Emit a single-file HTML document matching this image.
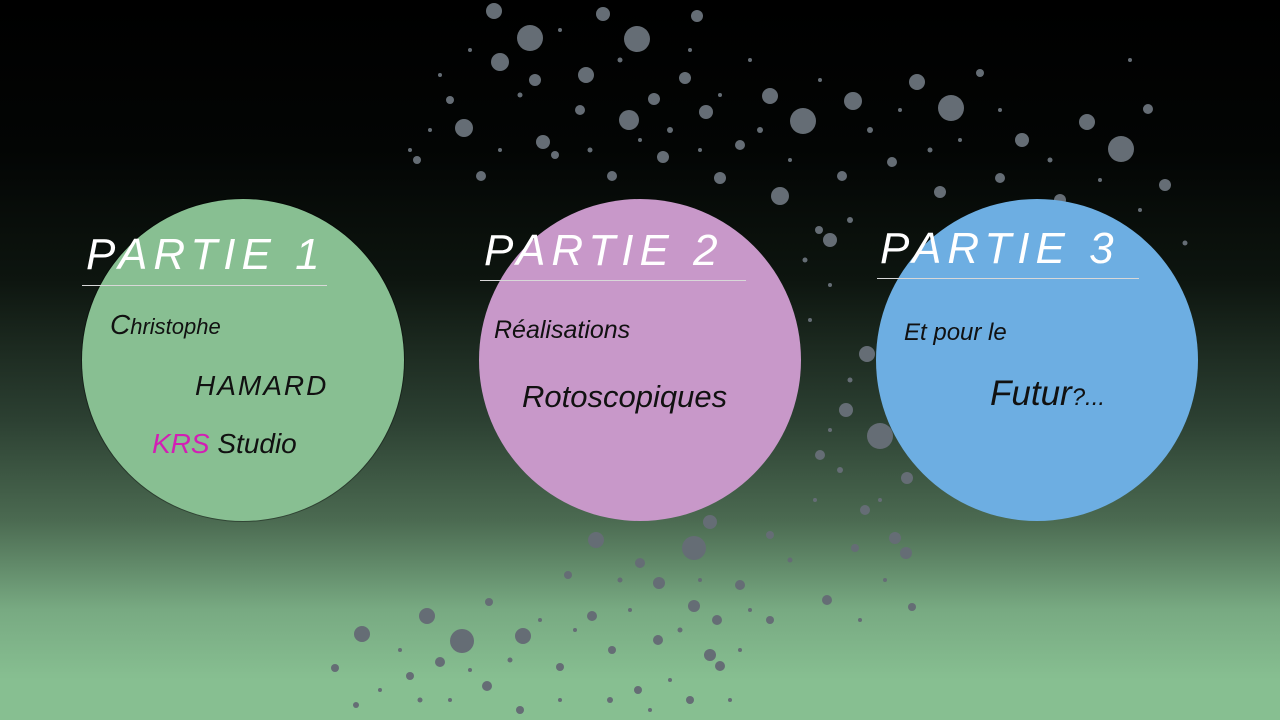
<!DOCTYPE html>
<html><head><meta charset="utf-8"><style>
body{margin:0;width:1280px;height:720px;overflow:hidden;position:relative;font-family:"Liberation Sans",sans-serif;
background:linear-gradient(to bottom,#000 0px,#030504 150px,#0d150f 280px,#2c4032 420px,#4b6a51 520px,#78aa82 610px,#87bf91 680px,#87bf91 720px);}
.c{position:absolute;width:322px;height:322px;border-radius:50%;top:199px;}
.t{position:absolute;color:#fff;font-style:italic;font-size:44px;letter-spacing:6px;font-family:"Liberation Sans",sans-serif;white-space:nowrap;}
.u{position:absolute;height:1px;background:#d8d8d8;}
.s{position:absolute;font-style:italic;color:#111;white-space:nowrap;font-family:"Liberation Sans",sans-serif;}
svg{position:absolute;left:0;top:0}
</style></head><body>
<svg width="1280" height="720" fill="#656d75">
<circle cx="494" cy="11" r="8"/><circle cx="530" cy="38" r="13"/><circle cx="637" cy="39" r="13"/><circle cx="603" cy="14" r="7"/><circle cx="697" cy="16" r="6"/><circle cx="500" cy="62" r="9"/><circle cx="464" cy="128" r="9"/><circle cx="535" cy="80" r="6"/><circle cx="586" cy="75" r="8"/><circle cx="629" cy="120" r="10"/><circle cx="654" cy="99" r="6"/><circle cx="685" cy="78" r="6"/><circle cx="706" cy="112" r="7"/><circle cx="770" cy="96" r="8"/><circle cx="803" cy="121" r="13"/><circle cx="853" cy="101" r="9"/><circle cx="917" cy="82" r="8"/><circle cx="951" cy="108" r="13"/><circle cx="1022" cy="140" r="7"/><circle cx="1087" cy="122" r="8"/><circle cx="1121" cy="149" r="13"/><circle cx="1165" cy="185" r="6"/><circle cx="1148" cy="109" r="5"/><circle cx="980" cy="73" r="4"/><circle cx="780" cy="196" r="9"/><circle cx="830" cy="240" r="7"/><circle cx="819" cy="230" r="4"/><circle cx="842" cy="176" r="5"/><circle cx="892" cy="162" r="5"/><circle cx="940" cy="192" r="6"/><circle cx="1000" cy="178" r="5"/><circle cx="1060" cy="200" r="6"/><circle cx="543" cy="142" r="7"/><circle cx="555" cy="155" r="4"/><circle cx="663" cy="157" r="6"/><circle cx="612" cy="176" r="5"/><circle cx="720" cy="178" r="6"/><circle cx="740" cy="145" r="5"/><circle cx="580" cy="110" r="5"/><circle cx="450" cy="100" r="4"/><circle cx="417" cy="160" r="4"/><circle cx="481" cy="176" r="5"/><circle cx="867" cy="354" r="8"/><circle cx="880" cy="436" r="13"/><circle cx="846" cy="410" r="7"/><circle cx="820" cy="455" r="5"/><circle cx="907" cy="478" r="6"/><circle cx="865" cy="510" r="5"/><circle cx="895" cy="538" r="6"/><circle cx="906" cy="553" r="6"/><circle cx="855" cy="548" r="4"/><circle cx="827" cy="600" r="5"/><circle cx="912" cy="607" r="4"/><circle cx="596" cy="540" r="8"/><circle cx="694" cy="548" r="12"/><circle cx="710" cy="522" r="7"/><circle cx="659" cy="583" r="6"/><circle cx="640" cy="563" r="5"/><circle cx="740" cy="585" r="5"/><circle cx="694" cy="606" r="6"/><circle cx="717" cy="620" r="5"/><circle cx="770" cy="535" r="4"/><circle cx="568" cy="575" r="4"/><circle cx="462" cy="641" r="12"/><circle cx="427" cy="616" r="8"/><circle cx="362" cy="634" r="8"/><circle cx="523" cy="636" r="8"/><circle cx="489" cy="602" r="4"/><circle cx="440" cy="662" r="5"/><circle cx="410" cy="676" r="4"/><circle cx="487" cy="686" r="5"/><circle cx="560" cy="667" r="4"/><circle cx="592" cy="616" r="5"/><circle cx="612" cy="650" r="4"/><circle cx="638" cy="690" r="4"/><circle cx="658" cy="640" r="5"/><circle cx="720" cy="666" r="5"/><circle cx="710" cy="655" r="6"/><circle cx="335" cy="668" r="4"/><circle cx="356" cy="705" r="3"/><circle cx="520" cy="710" r="4"/><circle cx="610" cy="700" r="3"/><circle cx="770" cy="620" r="4"/><circle cx="690" cy="700" r="4"/>
<g>
<circle cx="470" cy="50" r="2"/><circle cx="520" cy="95" r="2.5"/><circle cx="560" cy="30" r="2"/><circle cx="620" cy="60" r="2.5"/><circle cx="670" cy="130" r="3"/><circle cx="690" cy="50" r="2"/><circle cx="720" cy="95" r="2"/><circle cx="750" cy="60" r="2"/><circle cx="760" cy="130" r="3"/><circle cx="790" cy="160" r="2"/><circle cx="820" cy="80" r="2"/><circle cx="870" cy="130" r="3"/><circle cx="900" cy="110" r="2"/><circle cx="930" cy="150" r="2.5"/><circle cx="960" cy="140" r="2"/><circle cx="1000" cy="110" r="2"/><circle cx="1050" cy="160" r="2.5"/><circle cx="1100" cy="180" r="2"/><circle cx="1140" cy="210" r="2"/><circle cx="1185" cy="243" r="2.5"/><circle cx="1130" cy="60" r="2"/><circle cx="430" cy="130" r="2"/><circle cx="440" cy="75" r="2"/><circle cx="410" cy="150" r="2"/><circle cx="500" cy="150" r="2"/><circle cx="590" cy="150" r="2.5"/><circle cx="640" cy="140" r="2"/><circle cx="700" cy="150" r="2"/><circle cx="850" cy="220" r="3"/><circle cx="805" cy="260" r="2.5"/><circle cx="830" cy="285" r="2"/><circle cx="810" cy="320" r="2"/><circle cx="850" cy="380" r="2.5"/><circle cx="830" cy="430" r="2"/><circle cx="840" cy="470" r="3"/><circle cx="815" cy="500" r="2"/><circle cx="880" cy="500" r="2"/><circle cx="885" cy="580" r="2"/><circle cx="860" cy="620" r="2"/><circle cx="790" cy="560" r="2.5"/><circle cx="750" cy="610" r="2"/><circle cx="700" cy="580" r="2"/><circle cx="680" cy="630" r="2.5"/><circle cx="630" cy="610" r="2"/><circle cx="620" cy="580" r="2.5"/><circle cx="575" cy="630" r="2"/><circle cx="540" cy="620" r="2"/><circle cx="510" cy="660" r="2.5"/><circle cx="470" cy="670" r="2"/><circle cx="450" cy="700" r="2"/><circle cx="400" cy="650" r="2"/><circle cx="380" cy="690" r="2"/><circle cx="420" cy="700" r="2.5"/><circle cx="560" cy="700" r="2"/><circle cx="670" cy="680" r="2"/><circle cx="740" cy="650" r="2"/><circle cx="650" cy="710" r="2"/><circle cx="730" cy="700" r="2"/>
</g>
</svg>
<div class="c" style="left:82px;background:#88bf92;box-shadow:0 0 0 1px rgba(0,0,0,.35)"></div>
<div class="c" style="left:479px;background:#c898c9"></div>
<div class="c" style="left:876px;background:#6daee2"></div>

<div class="t" style="left:86px;top:230px">PARTIE 1</div>
<div class="u" style="left:82px;top:285px;width:245px"></div>
<div class="t" style="left:484px;top:226px">PARTIE 2</div>
<div class="u" style="left:480px;top:280px;width:266px"></div>
<div class="t" style="left:880px;top:224px">PARTIE 3</div>
<div class="u" style="left:877px;top:278px;width:262px"></div>

<div class="s" style="left:110px;top:309px;font-size:28px">C<span style="font-size:22px">hristophe</span></div>
<div class="s" style="left:195px;top:370px;font-size:28px;letter-spacing:2px">HAMARD</div>
<div class="s" style="left:152px;top:428px;font-size:28px"><span style="color:#d21fb4">KRS</span> Studio</div>

<div class="s" style="left:494px;top:316px;font-size:25px">Réalisations</div>
<div class="s" style="left:522px;top:379px;font-size:31px">Rotoscopiques</div>

<div class="s" style="left:904px;top:319px;font-size:24px">Et pour le</div>
<div class="s" style="left:990px;top:374px;font-size:35px">Futur<span style="font-size:24px">?...</span></div>
</body></html>
